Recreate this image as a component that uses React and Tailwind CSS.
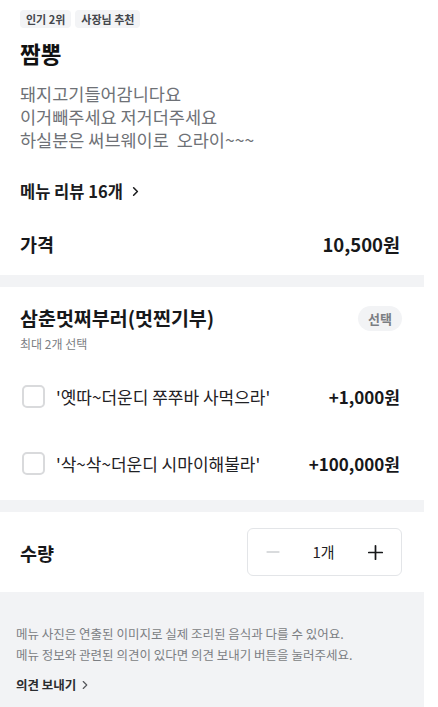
import { FiChevronRight, FiMinus, FiPlus } from 'react-icons/fi';

const font = { fontFamily: '"Noto Sans CJK KR", "Noto Sans", sans-serif' };

const Badge = ({ children }) => (
  <span className="rounded-[4px] bg-[#f3f4f6] px-[6px] py-[2px] text-[11px] font-bold leading-[14px] text-[#44474c]">
    {children}
  </span>
);

const OptionRow = ({ label, price }) => (
  <div className="flex h-[67px] items-center justify-between">
    <div className="flex items-center gap-[11px]">
      <span className="ml-[2px] h-[23px] w-[23px] rounded-[5px] border-2 border-[#d9dadc] bg-white" />
      <span className="text-[17px] leading-[22px] text-[#1f2124]">{label}</span>
    </div>
    <span className="text-[17px] font-bold text-[#17181a]">{price}</span>
  </div>
);

const Divider = () => <div className="h-[12px] bg-[#f2f3f5]" />;

export default function App() {
  return (
    <div className="min-h-screen bg-white" style={font}>
      <div className="w-[424px]">
        <div className="pl-5 pr-6">
          <div className="flex gap-[4px] pt-[10px]">
            <Badge>인기 2위</Badge>
            <Badge>사장님 추천</Badge>
          </div>
          <h1 className="mt-[11px] text-[22.5px] font-bold leading-[28px] text-[#111]">짬뽕</h1>
          <p className="mt-[15px] text-[17.5px] leading-[23px] text-[#6e7176]">
            돼지고기들어감니다요
            <br />
            이거빼주세요 저거더주세요
            <br />
            하실분은 써브웨이로&nbsp; 오라이~~~
          </p>
          <button className="mt-[30px] flex items-center gap-[5px] text-[16.5px] font-bold leading-[20px] text-[#1b1c1e]">
            메뉴 리뷰 16개
            <FiChevronRight className="h-[15px] w-[15px] stroke-[2.5]" />
          </button>
          <div className="flex h-[74px] items-center justify-between pt-[14px]">
            <span className="text-[18.5px] font-bold text-[#17181a]">가격</span>
            <span className="text-[18.5px] font-bold text-[#17181a]">10,500원</span>
          </div>
        </div>

        <Divider />

        <div className="pl-5 pr-[22px]">
          <div className="flex h-[26px] items-center justify-between mt-[18px]">
            <span className="text-[19.5px] font-bold leading-[26px] text-[#17181a]">
              삼춘멋쩌부러(멋찐기부)
            </span>
            <span className="rounded-full bg-[#f2f3f5] px-[10px] py-[3px] text-[13px] font-bold leading-[19px] text-[#7b7e83]">
              선택
            </span>
          </div>
          <p className="mt-[5px] text-[12px] leading-[16px] text-[#7b7e83]">최대 2개 선택</p>
          <div className="mt-[11px] pb-[3px] pr-[2px]">
            <OptionRow label="'옛따~더운디 쭈쭈바 사먹으라'" price="+1,000원" />
            <OptionRow label="'삭~삭~더운디 시마이해불라'" price="+100,000원" />
          </div>
        </div>

        <Divider />

        <div className="flex h-[80px] items-center justify-between pl-5 pr-[22px]">
          <span className="pt-[4px] text-[18.5px] font-bold text-[#17181a]">수량</span>
          <div className="flex h-[48px] w-[155px] items-center justify-between rounded-[6px] border border-[#e3e5e8] pl-[15px] pr-[14px]">
            <FiMinus className="h-[20px] w-[20px] text-[#cdcfd2]" />
            <span className="text-[15px] text-[#1f2124]">1개</span>
            <FiPlus className="h-[23px] w-[23px] stroke-[1.8] text-[#17181a]" />
          </div>
        </div>

        <div className="bg-[#f2f3f5] px-4 pb-[20px] pt-[31px]">
          <p className="text-[12.5px] leading-[21px] text-[#7b7e83]">
            메뉴 사진은 연출된 이미지로 실제 조리된 음식과 다를 수 있어요.
            <br />
            메뉴 정보와 관련된 의견이 있다면 의견 보내기 버튼을 눌러주세요.
          </p>
          <button className="mt-[11px] flex items-center gap-[2px] text-[12.5px] font-bold leading-[18px] text-[#2b2d30]">
            의견 보내기
            <FiChevronRight className="h-[14px] w-[14px] text-[#55585c]" />
          </button>
        </div>
      </div>
    </div>
  );
}
